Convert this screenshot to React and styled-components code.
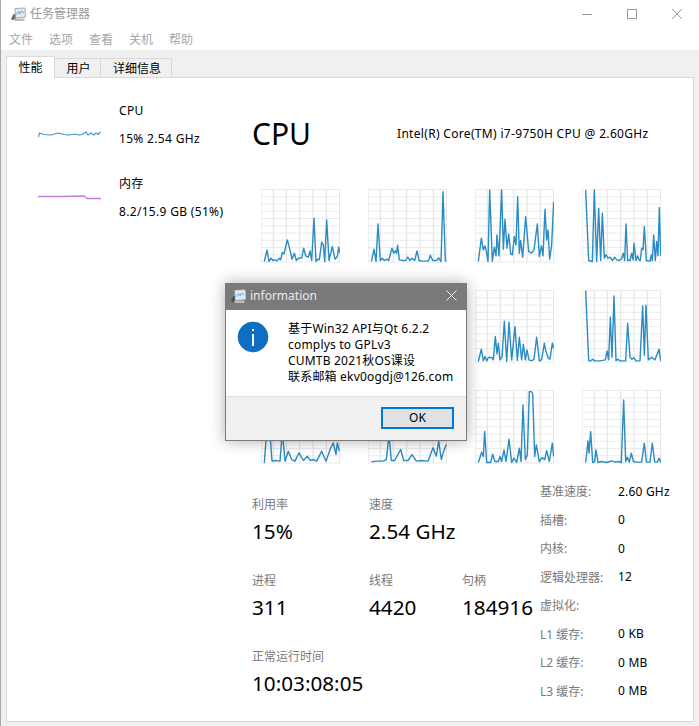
import React from 'react';
import styled, { createGlobalStyle } from 'styled-components';

const Global = createGlobalStyle`
  html, body { margin: 0; padding: 0; background: #fff; }
  #root { width: 699px; height: 726px; overflow: hidden; }
  * { box-sizing: border-box; }
`;
const FONT = `"Noto Sans", "Noto Sans CJK SC", sans-serif`;

const Win = styled.div`
  position: relative; width: 699px; height: 726px; background: #fff; overflow: hidden;
  font-family: ${FONT}; font-size: 12px; color: #000; display: flex; flex-direction: column;
  border-left: 1px solid #a8a8a8;
`;
const TitleBar = styled.div`
  height: 26px; display: flex; align-items: center; padding: 1px 0 0 9px; color: #999; gap: 4px; flex: none;
`;
const TitleText = styled.span` flex: 1; line-height: 16px; `;
const WinBtns = styled.div` display: flex; align-items: center; gap: 35px; padding-right: 17px; `;
const MenuBar = styled.div` height: 24px; display: flex; gap: 16px; padding: 2px 0 0 8px; align-items: center; color: #a6a6a6; flex: none; `;
const MenuItem = styled.span``;
const TabArea = styled.div`
  flex: 1; background: #f0f0f0; padding: 6px 5px 4px 5px; display: flex; flex-direction: column; min-height: 0;
`;
const Tabs = styled.div` display: flex; align-items: flex-end; height: 22px; flex: none; position: relative; z-index: 1; margin-bottom: -1px; `;
const Tab = styled.div`
  background: ${p => p.$active ? '#fff' : '#f0f0f0'};
  border: 1px solid #d9d9d9;
  border-bottom: ${p => p.$active ? 'none' : '1px solid #d9d9d9'};
  border-left: ${p => p.$first ? '1px solid #d9d9d9' : 'none'};
  height: ${p => p.$active ? '22px' : '20px'};
  width: ${p => p.$w}px; display: flex; align-items: center; justify-content: center;
  padding: ${p => p.$active ? '1px 0 0 0' : '1px 0 0 2px'}; line-height: 16px;
`;
const Pane = styled.div`
  flex: 1; background: #fff; border: 1px solid #d9d9d9; display: flex; min-height: 0; width: 688px;
`;
const Sidebar = styled.div` width: 245px; flex: none; display: flex; flex-direction: column; gap: 29px; padding: 25px 0 0 31px; `;
const SideItem = styled.div` display: flex; gap: 18px; `;
const SideInfo = styled.div` display: flex; flex-direction: column; gap: 12px; line-height: 16px; white-space: nowrap; letter-spacing: .32px; `;
const Thumb = styled.svg` width: 63px; height: 44px; flex: none; `;
const Main = styled.div` flex: 1; display: flex; flex-direction: column; min-width: 0; `;
const Header = styled.div` display: flex; align-items: center; height: 60px; margin-top: 26px; flex: none; position: relative; `;
const Big = styled.div` font-size: 30px; line-height: 40px; width: 145px; `;
const Model = styled.div` white-space: nowrap; line-height: 16px; letter-spacing: .32px; `;
const Charts = styled.div`
  display: grid; grid-template-columns: repeat(4, 79px); column-gap: 28px; row-gap: 27px;
  margin: 25px 0 0 9px; flex: none;
`;
const ChartSvg = styled.svg` width: 79px; height: 73.5px; display: block; `;
const Bottom = styled.div` display: flex; flex: 1; min-height: 0; margin-top: 13px; `;
const Stats = styled.div` width: 288px; flex: none; display: flex; flex-direction: column; gap: 28px; padding-top: 20px; `;
const StatRow = styled.div` display: flex; `;
const Stat = styled.div` width: ${p => p.$w}px; flex: none; white-space: nowrap; `;
const StatLabel = styled.div` color: #7a7a7a; line-height: 16px; margin-bottom: 4px; `;
const StatValue = styled.div` font-size: 20.7px; line-height: 28px; `;
const Specs = styled.div` display: grid; grid-template-columns: 78px auto; grid-auto-rows: 28.5px; align-items: center; align-content: start; padding-top: .5px; `;
const SpecLabel = styled.div` color: #7a7a7a; white-space: nowrap; `;
const SpecValue = styled.div` white-space: nowrap; letter-spacing: .2px; `;

const Dialog = styled.div`
  position: absolute; left: 224px; top: 283px; width: 242px; height: 158px; background: #fff;
  border: 1px solid #7b7b7b; box-shadow: 0 0 14px rgba(0,0,0,.32); display: flex; flex-direction: column;
`;
const DlgTitle = styled.div`
  height: 26px; background: #7a7a7a; color: #eaeaea; display: flex; align-items: center; padding: 0 9px 3px 4px; gap: 4px; flex: none;
`;
const DlgTitleText = styled.span` flex: 1; `;
const DlgBody = styled.div` flex: 1; display: flex; padding: 11px 0 0 11px; gap: 19px; `;
const DlgText = styled.div` line-height: 16px; white-space: nowrap; letter-spacing: .2px; `;
const DlgFooter = styled.div`
  height: 44px; background: #f0f0f0; border-top: 1px solid #dfdfdf; display: flex; justify-content: flex-end; padding: 10px 12px 0 0; flex: none;
`;
const OkBtn = styled.button`
  width: 73px; height: 22px; border: 2px solid #0078d7; background: #e1e1e1; font: inherit; color: #000; padding: 0; line-height: 16px;
`;

const AppIcon = ({ edge = '#9a9a9a', base = '#6f6f6f' }) => (
  <svg width="16" height="16" viewBox="0 0 16 16">
    <path d="M1 13 L3.5 8 L6 8 L6 14 L2 14Z" fill={base} />
    <path d="M5 2.5 L15 2 L15.5 11 L5.5 12Z" fill="#dcebf8" stroke={edge} strokeWidth=".8" />
    <path d="M6.5 8.5 L8.5 5.5 L10 8 L11.5 5 L14 7" fill="none" stroke="#6aa6dc" strokeWidth="1" />
    <path d="M4 12.5 H15 L14 15 H5Z" fill="#bdbdbd" />
  </svg>
);

const C = [
  { o: [63, 57], d: '73,275 81,240 87,275 93,265 99,272 105,270 111,273 118,265 122,270 127,248 132,252 142,210 150,240 156,268 163,250 169,272 175,265 185,265 191,235 197,258 205,262 210,243 215,272 222,145 228,275 233,268 238,270 245,217 250,225 254,275 260,150 267,272 277,230 285,268 292,260 296,232 300,250' },
  { o: [384, 57], d: '394,275 402,238 408,275 414,162 421,272 427,265 433,272 440,268 446,272 456,235 461,250 466,243 470,250 473,226 478,270 490,272 497,272 503,262 510,272 516,265 524,272 531,243 537,272 548,274 560,274 566,272 571,256 578,272 590,272 596,264 603,275 609,65 616,272 620,275' },
  { o: [45, 57], d: '55,275 64,205 70,240 75,228 80,250 84,275 89,60 97,275 103,232 108,258 111,195 117,258 125,60 130,238 135,148 141,235 146,192 152,252 157,255 163,200 168,225 173,80 178,250 182,212 188,262 197,140 206,245 215,250 222,240 232,162 238,260 244,228 249,258 255,118 260,210 264,180 269,268 275,225 281,95' },
  { o: [366, 57], d: '377,60 386,272 397,275 403,60 410,275 416,115 422,272 427,130 433,265 438,255 444,265 450,262 458,272 464,262 470,270 476,272 484,268 490,250 494,272 498,162 503,272 510,272 515,250 519,270 522,220 528,272 533,258 537,270 541,272 545,235 549,240 553,170 559,272 570,274 574,255 577,272 581,195 586,272 590,215 594,258 598,113 602,258' },
  { o: [63, 57], d: '73,275 81,200 90,270 110,260 130,200 150,265 170,230 190,270 210,180 230,270 260,220 280,265 300,240' },
  { o: [384, 57], d: '394,275 414,200 430,270 450,250 470,200 490,270 520,230 550,270 570,190 590,270 610,220 620,270' },
  { o: [45, 30], d: '55,245 64,208 70,243 75,230 80,243 85,233 95,233 100,240 106,170 111,222 115,190 120,240 126,232 133,124 140,245 147,127 155,240 165,140 172,242 178,172 185,240 190,193 196,240 201,210 207,240 215,243 222,238 230,172 238,243 245,240 253,190 258,215 265,235 270,238 277,190 281,205' },
  { o: [366, 30], d: '377,32 386,243 392,243 398,238 404,243 420,243 436,240 441,213 446,240 451,112 456,232 462,48 468,243 473,238 480,243 497,243 503,130 510,232 516,238 522,234 528,243 540,243 548,78 553,225 558,76 565,240 575,232 585,240 597,208 602,243' },
  { o: [123, 346], d: '133,565 140,470 147,440 156,560 165,558 180,560 187,470 195,560 205,530 215,555 225,560 237,535 250,558 262,545 270,558 280,555 290,560 305,530 318,560 332,520 340,505 348,540 352,505 358,530' },
  { o: [445, 346], d: '455,562 470,560 490,560 500,555 508,480 515,558 525,558 543,525 552,558 565,558 577,540 590,560 605,558 625,560 640,520 650,545 657,500 665,555 672,530 680,510' },
  { o: [45, 330], d: '55,548 65,517 70,530 74,455 80,548 92,548 98,523 105,545 115,545 120,530 125,545 132,510 138,545 147,478 155,548 162,535 170,548 178,505 183,545 189,375 196,540 202,525 208,335 214,335 218,340 224,530 229,495 238,545 246,533 254,540 260,512 268,545 277,490 281,530' },
  { o: [366, 330], d: '377,548 384,483 387,520 392,455 398,548 404,545 408,510 414,548 425,545 440,548 455,543 465,547 475,545 484,548 491,360 497,545 502,532 508,547 514,520 520,545 530,547 545,547 553,490 559,546 570,547 577,490 584,546 592,547 598,535 602,548' },
];

const Chart = ({ o: [x, y], d }) => {
  const vx = [0, 37, 76, 116, 156, 196, 236];
  const hy = Array.from({ length: 11 }, (_, i) => i * 21.8 + 1.5);
  return (
    <ChartSvg viewBox={`${x} ${y} 237 221`} preserveAspectRatio="none">
      {hy.map(v => <line key={v} x1={x} x2={x + 237} y1={y + v} y2={y + v} stroke="#ebebeb" strokeWidth="3.6" />)}
      {vx.map(v => <line key={v} x1={x + v} x2={x + v} y1={y} y2={y + 221} stroke="#e6e6e6" strokeWidth="3.6" />)}
      <polyline points={d} fill="none" stroke="#2a8cc4" strokeWidth="4.2" strokeLinejoin="round" />
    </ChartSvg>
  );
};

export default function App() {
  return (
    <Win>
      <Global />
      <TitleBar>
        <AppIcon />
        <TitleText>任务管理器</TitleText>
        <WinBtns>
          <svg width="10" height="10" viewBox="0 0 10 10"><line x1="0" x2="10" y1="5.5" y2="5.5" stroke="#999" /></svg>
          <svg width="10" height="10" viewBox="0 0 10 10"><rect x=".5" y=".5" width="9" height="9" fill="none" stroke="#999" /></svg>
          <svg width="10" height="10" viewBox="0 0 10 10"><path d="M0 0L10 10M10 0L0 10" stroke="#999" /></svg>
        </WinBtns>
      </TitleBar>
      <MenuBar>
        {['文件', '选项', '查看', '关机', '帮助'].map(m => <MenuItem key={m}>{m}</MenuItem>)}
      </MenuBar>
      <TabArea>
        <Tabs>
          <Tab $active $first $w={49}>性能</Tab>
          <Tab $w={46}>用户</Tab>
          <Tab $w={71}>详细信息</Tab>
        </Tabs>
        <Pane>
          <Sidebar>
            <SideItem>
              <Thumb viewBox="0 -18 63 44">
                <polyline points="0.5,16 1.5,12 6,13.5 13,14 20,12 26,13.5 31,14 36,13 41,14 44,13.5 48,11 50,14 53,12 56,14 58,12 60,13.5 62.5,11" fill="none" stroke="#3d95c7" strokeWidth="1.15" />
              </Thumb>
              <SideInfo><span>CPU</span><span>15% 2.54 GHz</span></SideInfo>
            </SideItem>
            <SideItem>
              <Thumb viewBox="0 -5 63 44">
                <polyline points="0,15.5 23,15.5 46,15 49,17.5 63,17.5" fill="none" stroke="#c283d2" strokeWidth="1.3" />
              </Thumb>
              <SideInfo><span>内存</span><span>8.2/15.9 GB (51%)</span></SideInfo>
            </SideItem>
          </Sidebar>
          <Main>
            <Header><Big>CPU</Big><Model>Intel(R) Core(TM) i7-9750H CPU @ 2.60GHz</Model></Header>
            <Charts>
              {C.map((c, i) => <Chart key={i} {...c} />)}
            </Charts>
            <Bottom>
              <Stats>
                <StatRow>
                  <Stat $w={117}><StatLabel>利用率</StatLabel><StatValue>15%</StatValue></Stat>
                  <Stat $w={93}><StatLabel>速度</StatLabel><StatValue>2.54 GHz</StatValue></Stat>
                </StatRow>
                <StatRow>
                  <Stat $w={117}><StatLabel>进程</StatLabel><StatValue>311</StatValue></Stat>
                  <Stat $w={93}><StatLabel>线程</StatLabel><StatValue>4420</StatValue></Stat>
                  <Stat $w={78}><StatLabel>句柄</StatLabel><StatValue>184916</StatValue></Stat>
                </StatRow>
                <StatRow>
                  <Stat $w={200}><StatLabel>正常运行时间</StatLabel><StatValue>10:03:08:05</StatValue></Stat>
                </StatRow>
              </Stats>
              <Specs>
                <SpecLabel>基准速度:</SpecLabel><SpecValue>2.60 GHz</SpecValue>
                <SpecLabel>插槽:</SpecLabel><SpecValue>0</SpecValue>
                <SpecLabel>内核:</SpecLabel><SpecValue>0</SpecValue>
                <SpecLabel>逻辑处理器:</SpecLabel><SpecValue>12</SpecValue>
                <SpecLabel>虚拟化:</SpecLabel><SpecValue></SpecValue>
                <SpecLabel>L1 缓存:</SpecLabel><SpecValue>0 KB</SpecValue>
                <SpecLabel>L2 缓存:</SpecLabel><SpecValue>0 MB</SpecValue>
                <SpecLabel>L3 缓存:</SpecLabel><SpecValue>0 MB</SpecValue>
              </Specs>
            </Bottom>
          </Main>
        </Pane>
      </TabArea>
      <Dialog>
        <DlgTitle>
          <AppIcon edge="#d8d8d8" base="#4f4f4f" />
          <DlgTitleText>information</DlgTitleText>
          <svg width="11" height="11" viewBox="0 0 11 11"><path d="M.5.5L10.5 10.5M10.5.5L.5 10.5" stroke="#f0f0f0" /></svg>
        </DlgTitle>
        <DlgBody>
          <svg width="32" height="32" viewBox="0 0 32 32" style={{ flex: 'none' }}>
            <circle cx="16" cy="16" r="15" fill="#0c6fc4" stroke="#0a5ea8" strokeWidth=".6" />
            <rect x="15" y="13" width="2" height="12" fill="#fff" />
            <rect x="15" y="8" width="2" height="2" fill="#fff" />
          </svg>
          <DlgText>
            基于Win32 API与Qt 6.2.2<br />
            complys to GPLv3<br />
            CUMTB 2021秋OS课设<br />
            联系邮箱 ekv0ogdj@126.com
          </DlgText>
        </DlgBody>
        <DlgFooter><OkBtn>OK</OkBtn></DlgFooter>
      </Dialog>
    </Win>
  );
}
